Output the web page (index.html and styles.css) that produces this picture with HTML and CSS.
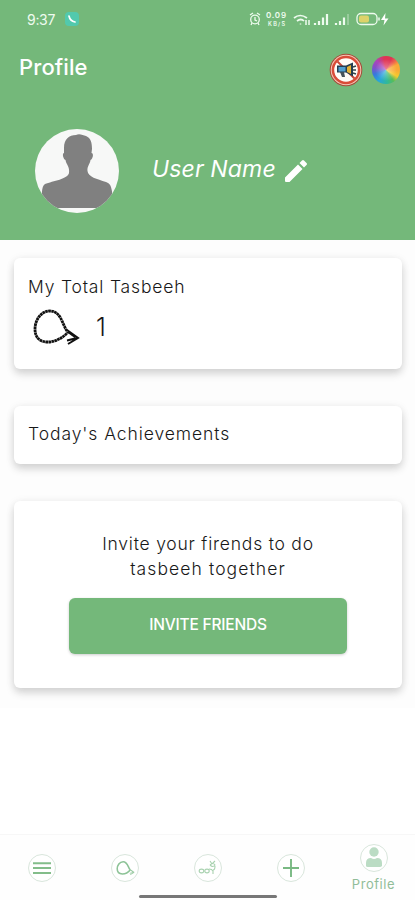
FILE: index.html
```html
<!DOCTYPE html>
<html lang="en">
<head>
<meta charset="utf-8">
<meta name="viewport" content="width=device-width, initial-scale=1">
<title>Profile</title>
<link rel="stylesheet" href="styles.css">
</head>
<body>
<svg width="0" height="0" class="defs" aria-hidden="true">
  <symbol id="beads" viewBox="0 0 48 38">
    <path d="M35 23C30 16 29 3 18 3C9 3 3 12 3 21C3 30 8 34 16 34C24 34 32 29 36 24"/>
    <path stroke-dasharray="none" stroke-width="2" d="M35 22L46 30L36 36M36 24L43 29M45 30L35 32.500"/>
  </symbol>
</svg>
<header class="header">
  <div class="status">
    <span class="time">9:37</span>
    <svg class="call" viewBox="0 0 14 14"><rect width="14" height="14" rx="4" fill="#52c9ad"/><path d="M4 4Q5 9 10 10" fill="none" stroke="#fff" stroke-width="1.700" stroke-linecap="round"/></svg>
    <svg class="indicators" viewBox="0 0 144 20" fill="none" stroke="#eefbef" stroke-width="1.300">
      <circle cx="7" cy="10.500" r="4.300"/><path d="M7 8v3l2 1M2 6l3-2M9 4l3 2M4 14l-1 2M10 14l1 2"/>
      <g fill="#eefbef" stroke="none" font-family="Inter, sans-serif" font-weight="600"><text x="18" y="9" font-size="8" textLength="20">0.09</text><text x="20" y="17" font-size="5.500" textLength="17">KB/S</text></g>
      <path d="M46 9q6-5 13 0M49 12q4-3 7 0" stroke-width="1.700"/><path d="M52.500 15.500v-1M58 11v5M61 16v-5" stroke-width="1.500"/>
      <path d="M67 16v-2M71 16v-4M75 16V8.500M79 16V5" stroke-width="2.200"/>
      <path d="M88 16v-2M92 16v-4M96 16V8.500" stroke-width="2.200"/><path d="M100 16V5" stroke-width="2" opacity=".3"/>
      <rect x="109" y="4.500" width="20" height="11" rx="4"/><rect x="111" y="6.500" width="10" height="7" rx="2" fill="#ddd36a" stroke="none"/><path d="M131 8.500v3" stroke-width="1.500"/>
      <path d="M137.500 4l-4.500 7h3.500l-1 5.500 5-7h-3.500z" fill="#fff" stroke="none"/>
    </svg>
  </div>
  <div class="appbar">
    <h1>Profile</h1>
    <svg class="noads" viewBox="0 0 34 34">
      <circle cx="17" cy="17" r="16.300" fill="#a54836"/><circle cx="17" cy="17" r="15.300" fill="#f3c9b9"/><circle cx="17" cy="17" r="14.300" fill="#d94c39"/><circle cx="17" cy="17" r="11.800" fill="#fffdf8"/>
      <path d="M8.500 8.500l17 17" stroke="#ca4a38" stroke-width="2"/>
      <path d="M8 12.500h9l7-3v14l-7-4H8z" fill="#243e50"/><path d="M9.500 14h7v4.500h-7z" fill="#4f9fd0"/><path d="M18 14l4-2v9l-4-2z" fill="#e3af31"/><path d="M11 19h4l1 5h-3z" fill="#46535a"/><path d="M24 14l3-1M24 17h3M24 20l3 1" stroke="#35474b" stroke-width="1.500"/>
    </svg>
    <div class="wheel"></div>
  </div>
  <div class="user">
    <svg class="avatar" viewBox="0 0 84 84">
      <defs><clipPath id="round"><circle cx="42" cy="42" r="42"/></clipPath></defs>
      <g clip-path="url(#round)"><path fill="#f7f8f7" d="M0 0h84v84H0z"/><path fill="#808080" d="M29 19C29 10 34 6 41 6C44 4 48 6 51 7C56 9 57 14 57 20L56.500 24C59 24 58 30 55.500 31C55 35 52 37 52.500 42C53 48 62 50 71 53C77 55 77 60 79 79H6C7 68 6 57 10 55C18 52 33 50 34 44C35 38 31 35 30.500 31C28 30 27 24 29 24Z"/></g>
    </svg>
    <span class="name">User Name</span>
    <svg class="edit" viewBox="0 0 22 22"><path fill="#fff" d="M0 17.500L13 4.500l4.500 4.500L4.500 22H1Q0 22 0 21zM14.500 3L17 .5q1-1 2 0l2.500 2.500q1 1 0 2L19 7.500z"/></svg>
  </div>
</header>
<main class="content">
  <section class="card total">
    <h2 class="total-title">My Total Tasbeeh</h2>
    <div class="count"><svg class="beads"><use href="#beads"/></svg><span>1</span></div>
  </section>
  <section class="card today"><h2 class="today-title">Today's Achievements</h2></section>
  <section class="card invite">
    <p><span class="line-one">Invite your firends to do</span><br><span class="line-two">tasbeeh together</span></p>
    <button>INVITE FRIENDS</button>
  </section>
</main>
<nav class="nav">
  <a><svg class="icon" viewBox="0 0 30 30"><circle class="ring" cx="15" cy="15" r="13.500"/><path d="M6 10.200h18M6 15h18M6 20h18" stroke="#83bd8a" stroke-width="1.900"/></svg></a>
  <a><svg class="icon" viewBox="0 0 30 30"><circle class="ring" cx="15" cy="15" r="13.500"/><use class="mini" href="#beads" x="6" y="7.500" width="19" height="15"/></svg></a>
  <a><svg class="icon" viewBox="0 0 30 30"><circle class="ring" cx="15" cy="15" r="13.500"/><g fill="none" stroke="#a9d2b0" stroke-width="1.100"><ellipse cx="8.500" cy="18" rx="2.300" ry="1.900"/><ellipse cx="14" cy="18" rx="2.200" ry="1.900"/><path d="M16 16q3 0 4 2v3M20 17q2 0 2-4M17 8l2 3 3-3M17 12q3-3 5 0-2 3-5 0"/></g></svg></a>
  <a><svg class="icon" viewBox="0 0 30 30"><circle class="ring" cx="15" cy="15" r="13.500"/><path d="M7 15h16M15 6v18" stroke="#79b983" stroke-width="1.900"/></svg></a>
  <a class="active"><svg class="icon" viewBox="0 0 30 30"><circle class="ring" cx="15" cy="15" r="13.500"/><circle cx="15" cy="9" r="4.700" fill="#bbdcc4"/><path d="M7 23v-3q0-5 5-5 3 2 6 0 5 0 5 5v3q-1 1-2 1H9q-2 0-2-1z" fill="#bbdcc4"/></svg><span>Profile</span></a>
  <div class="home-bar"></div>
</nav>
</body>
</html>
```
FILE: styles.css
```css
* { box-sizing: border-box; }
body { margin: 0; height: 900px; display: flex; flex-direction: column; background: #fff; color: #181818; font-family: Inter, "Open Sans", sans-serif; overflow: hidden; }
svg { display: block; flex: none; }
h1, h2, p { margin: 0; font-weight: 400; }
.defs { position: absolute; }
.header { height: 240px; flex: none; background: #74b87a; color: #fff; }
.status { height: 40px; display: flex; align-items: center; padding: 0 23px 2px 27px; }
.time { width: 38px; font-size: 14px; letter-spacing: -.3px; color: #effbf0; }
.call { width: 14px; height: 14px; }
.indicators { width: 144px; height: 20px; margin-left: auto; }
.appbar { display: flex; align-items: center; height: 60px; padding: 0 15px 0 19px; }
.appbar h1 { font-size: 22px; font-weight: 500; margin: -6px auto 0 0; letter-spacing: .1px; }
.noads { width: 34px; height: 34px; margin-right: 9px; }
.wheel { width: 28px; height: 28px; border-radius: 50%; background: radial-gradient(circle, #ffffff66 0, transparent 55%), conic-gradient(#df3454 0 25deg, #ee654c 45deg, #f9a936 65deg 90deg, #f6c92d 120deg, #58bd59 145deg, #30b99a 175deg, #28a5db 215deg, #3978dc 250deg, #8052ca 280deg, #ac45ba 315deg, #df3454 350deg); }
.user { display: flex; align-items: center; padding: 29px 0 0 35px; }
.avatar { width: 84px; height: 84px; }
.name { width: 134px; margin: -4px 0 0 33px; font-size: 23px; font-style: italic; white-space: nowrap; letter-spacing: .15px; }
.edit { width: 22px; height: 22px; margin-left: -1px; }
.content { display: flex; flex-direction: column; gap: 37px; padding: 18px 13px 0 14px; background: #fdfdfd; height: 468px; }
.card { background: #fff; border-radius: 6px; box-shadow: 0 5px 9px #00000024, 0 1px 10px #00000012; }
.card h2 { font-size: 17.500px; font-weight: 300; line-height: 24px; white-space: nowrap; }
.total { height: 111px; padding: 17px 14px; }
.total-title { letter-spacing: .82px; }
.count { display: flex; align-items: center; margin-top: 9px; padding-left: 4px; font-size: 25px; font-weight: 300; line-height: 38px; }
.beads { width: 48px; height: 38px; margin-right: 16px; fill: none; stroke: #111; stroke-width: 2.800; stroke-dasharray: 2.600 .4; }
.count span { margin-top: -1px; }
.today { height: 58px; padding: 16px 14px; }
.today-title { letter-spacing: .92px; }
.invite { height: 187px; padding: 30px 55px 0; text-align: center; }
.invite p { font-size: 17.500px; font-weight: 300; line-height: 25px; white-space: nowrap; }
.line-one { letter-spacing: .78px; }
.line-two { letter-spacing: 1.1px; }
.invite button { width: 278px; height: 56px; margin-top: 17px; padding: 0 0 3px; border: 0; border-radius: 6px; background: #74b87a; color: #fff; font: 500 15.500px Inter, sans-serif; letter-spacing: -.2px; box-shadow: 0 1px 3px #0003; }
.nav { position: relative; height: 66px; margin-top: auto; display: grid; grid-template-columns: repeat(5, 1fr); border-top: 1px solid #f7f7f7; background: #fefefe; }
.nav a { display: flex; flex-direction: column; align-items: center; padding-top: 18px; }
.nav .active { padding-top: 8px; color: #91bd99; font-size: 13px; }
.active span { line-height: 17px; margin-top: 3px; letter-spacing: .55px; }
.icon { width: 30px; height: 30px; }
.ring { fill: #fff; stroke: #d9e6dc; stroke-width: 1; }
.mini { fill: none; stroke: #8dc397; stroke-width: 4; }
.home-bar { position: absolute; left: 139px; bottom: 2px; width: 138px; height: 3px; border-radius: 2px; background: #777; }
```
